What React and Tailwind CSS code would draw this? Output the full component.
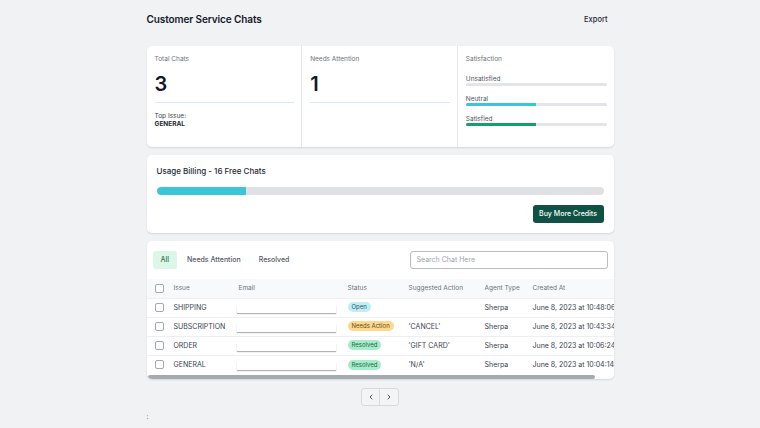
import React from 'react';

const rows = [
  { issue: 'SHIPPING', status: 'Open', action: '', agent: 'Sherpa', created: 'June 8, 2023 at 10:48:06 AM' },
  { issue: 'SUBSCRIPTION', status: 'Needs Action', action: "'CANCEL'", agent: 'Sherpa', created: 'June 8, 2023 at 10:43:34 AM' },
  { issue: 'ORDER', status: 'Resolved', action: "'GIFT CARD'", agent: 'Sherpa', created: 'June 8, 2023 at 10:06:24 AM' },
  { issue: 'GENERAL', status: 'Resolved', action: "'N/A'", agent: 'Sherpa', created: 'June 8, 2023 at 10:04:14 AM' },
];

const badgeStyles = {
  Open: 'bg-[#bfeef5] text-[#1f5f6b]',
  'Needs Action': 'bg-[#fcd98f] text-[#6b4a12]',
  Resolved: 'bg-[#a6ecc9] text-[#1d6446]',
};

const Checkbox = () => (
  <div className="w-[9px] h-[9px] rounded-[2px] border border-[#a3a8b0] bg-white" />
);

const Bar = ({ label, fill, color }) => (
  <div>
    <div className="text-[6.5px] leading-[8px] text-[#4b5563]">{label}</div>
    <div className="h-[3px] rounded-full bg-[#e2e4e8] overflow-hidden">
      <div className={`h-full ${color}`} style={{ width: `${fill}%` }} />
    </div>
  </div>
);

const App = () => {
  return (
    <div className="min-h-[428px] bg-[#f1f2f4] font-['Inter',sans-serif] text-[#374151]">
      <div className="w-[467px] mx-auto">
        {/* header */}
        <div className="flex items-center justify-between h-[38px] pt-[1px]">
          <h1 className="text-[10px] font-semibold tracking-[-0.1px] text-[#111827]">Customer Service Chats</h1>
          <button className="text-[7.5px] font-medium text-[#1f2937] mr-[6px]">Export</button>
        </div>

        {/* stats */}
        <div className="mt-[8px] h-[101px] bg-white rounded-[5px] shadow-[0_1px_2px_rgba(0,0,0,0.12)] grid grid-cols-3 divide-x divide-[#e5e7eb]">
          <div className="pl-[8px] pr-[7px] pt-[9px]">
            <div className="text-[6.5px] text-[#6b7280]">Total Chats</div>
            <div className="text-[20px] leading-[20px] font-semibold text-[#111827] mt-[9px]">3</div>
            <div className="h-[1px] bg-[#dbe7fb] mt-[8px]" />
            <div className="text-[6.5px] text-[#374151] mt-[9px] leading-[8px]">Top Issue:</div>
            <div className="text-[6.5px] font-bold text-[#1f2937] leading-[8px]">GENERAL</div>
          </div>
          <div className="pl-[8px] pr-[7px] pt-[9px]">
            <div className="text-[6.5px] text-[#6b7280]">Needs Attention</div>
            <div className="text-[20px] leading-[20px] font-semibold text-[#111827] mt-[9px]">1</div>
            <div className="h-[1px] bg-[#dbe7fb] mt-[8px]" />
          </div>
          <div className="pl-[8px] pr-[7px] pt-[9px]">
            <div className="text-[6.5px] text-[#6b7280]">Satisfaction</div>
            <div className="mt-[10px] flex flex-col gap-[9px]">
              <Bar label="Unsatisfied" fill={0} color="bg-[#3cc5d6]" />
              <Bar label="Neutral" fill={50} color="bg-[#3cc5d6]" />
              <Bar label="Satisfied" fill={50} color="bg-[#15a06b]" />
            </div>
          </div>
        </div>

        {/* billing */}
        <div className="mt-[8px] h-[78px] bg-white rounded-[5px] shadow-[0_1px_2px_rgba(0,0,0,0.12)] px-[10px] pt-[11px]">
          <div className="text-[8px] font-medium text-[#1f2937] leading-[10px]">Usage Billing - 16 Free Chats</div>
          <div className="mt-[11px] h-[8px] rounded-full bg-[#dfe1e5] overflow-hidden">
            <div className="h-full w-[20%] bg-[#3cc5d6] rounded-l-full" />
          </div>
          <div className="flex justify-end mt-[10px]">
            <button className="h-[18px] w-[71px] rounded-[3px] bg-[#0f5243] text-white text-[7px] font-medium">Buy More Credits</button>
          </div>
        </div>

        {/* table */}
        <div className="mt-[8px] h-[138px] bg-white rounded-[5px] shadow-[0_1px_2px_rgba(0,0,0,0.12)] overflow-hidden">
          <div className="flex items-center justify-between px-[6px] h-[38px]">
            <div className="flex items-center gap-[10px] text-[7px] font-medium text-[#525a66]">
              <div className="h-[18px] px-[8px] flex items-center rounded-[3px] bg-[#dcf7e8] text-[#1e7d4f]">All</div>
              <div>Needs Attention</div>
              <div className="ml-[8px]">Resolved</div>
            </div>
            <div className="w-[198px] h-[18px] rounded-[3px] border border-[#b8bcc4] flex items-center px-[6px] text-[7px] text-[#9ca3af]">
              Search Chat Here
            </div>
          </div>
          <table className="w-[560px] border-collapse text-left whitespace-nowrap">
            <thead>
              <tr className="h-[19px] bg-[#f8f9fa] text-[6.5px] text-[#6b7280]">
                <th className="w-[27px] pl-[8px] font-normal"><Checkbox /></th>
                <th className="w-[65px] pt-[2px] font-normal">Issue</th>
                <th className="w-[109px] pt-[2px] font-normal">Email</th>
                <th className="w-[61px] pt-[2px] font-normal">Status</th>
                <th className="w-[76px] pt-[2px] font-normal">Suggested Action</th>
                <th className="w-[48px] pt-[2px] font-normal">Agent Type</th>
                <th className="pt-[2px] font-normal">Created At</th>
              </tr>
            </thead>
            <tbody className="text-[7px] text-[#374151]">
              {rows.map((r) => (
                <tr key={r.created} className="h-[19px] border-t border-[#eceef1]">
                  <td className="pl-[8px]"><Checkbox /></td>
                  <td className="pt-[1px]">{r.issue}</td>
                  <td>
                    <div className="w-[99px] h-[8px] -ml-[2px] mt-[2px] bg-white shadow-[0_1px_1px_rgba(0,0,0,0.3)]" />
                  </td>
                  <td>
                    <span className={`inline-block px-[4px] py-[1px] rounded-full text-[6px] leading-[8px] ${badgeStyles[r.status]}`}>{r.status}</span>
                  </td>
                  <td className="pt-[1px]">{r.action}</td>
                  <td className="pt-[1px]">{r.agent}</td>
                  <td className="pt-[1px]">{r.created}</td>
                </tr>
              ))}
            </tbody>
          </table>
          <div className="px-[1px] mt-[1px]">
            <div className="h-[4px] w-[447px] rounded-full bg-[#a5a9b2]" />
          </div>
        </div>

        {/* pagination */}
        <div className="flex justify-center mt-[9px]">
          <div className="flex h-[18px] rounded-[3px] border border-[#d6d9de] bg-[#f3f4f6] overflow-hidden">
            <button className="w-[18px] flex items-center justify-center border-r border-[#d6d9de]">
              <svg width="8" height="8" viewBox="0 0 24 24" fill="none" stroke="#4b5563" strokeWidth="3" strokeLinecap="round" strokeLinejoin="round"><path d="M15 18l-6-6 6-6" /></svg>
            </button>
            <button className="w-[18px] flex items-center justify-center">
              <svg width="8" height="8" viewBox="0 0 24 24" fill="none" stroke="#4b5563" strokeWidth="3" strokeLinecap="round" strokeLinejoin="round"><path d="M9 18l6-6-6-6" /></svg>
            </button>
          </div>
        </div>

        <div className="text-[7px] text-[#6b7280] mt-[7px] leading-[8px]">:</div>
      </div>
    </div>
  );
};

export default App;
